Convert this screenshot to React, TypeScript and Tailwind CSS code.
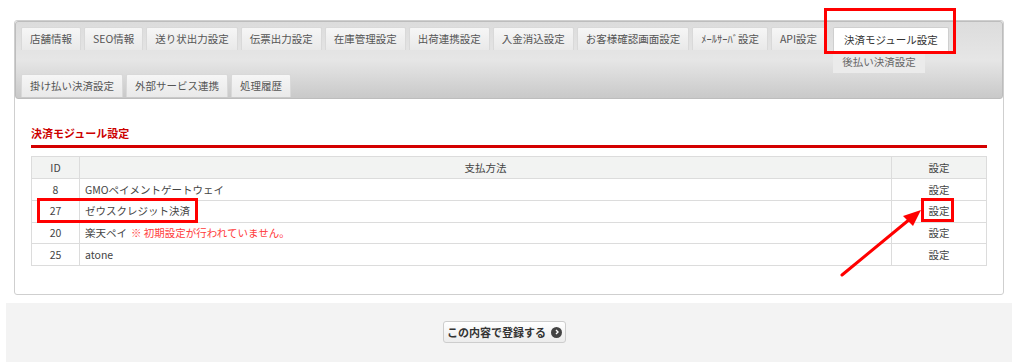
const row1 = [
  "店舗情報",
  "SEO情報",
  "送り状出力設定",
  "伝票出力設定",
  "在庫管理設定",
  "出荷連携設定",
  "入金消込設定",
  "お客様確認画面設定",
  "ﾒｰﾙｻｰﾊﾞ設定",
  "API設定",
];

const row2 = ["掛け払い決済設定", "外部サービス連携", "処理履歴"];

const methods = [
  { id: 8, name: "GMOペイメントゲートウェイ" },
  { id: 27, name: "ゼウスクレジット決済" },
  { id: 20, name: "楽天ペイ", warn: "※ 初期設定が行われていません。" },
  { id: 25, name: "atone" },
];

const Tab = ({ label }: { label: string }) => (
  <div className="h-[23px] px-2 flex items-center whitespace-nowrap text-[10.5px] text-[#555] bg-gradient-to-b from-[#f6f6f6] to-[#e9e9e9] border border-b-0 border-[#d9d9d9] rounded-t-[2px]">
    {label}
  </div>
);

export default function App() {
  return (
    <div className="relative w-[1024px] h-[362px] overflow-hidden bg-white font-['Noto_Sans_CJK_JP',sans-serif] text-[#444]">
      {/* main panel */}
      <div className="ml-[14px] mt-5 w-[990px] h-[275px] border border-[#cfcfcf] rounded-[3px]">
        {/* tab bar */}
        <div className="h-[78px] border border-[#bdbdbd] rounded-[3px] bg-gradient-to-b from-[#dcdcdc] via-[#e6e6e6] to-[#c9c9c9] pl-[5px] pt-[5px]">
          <div className="flex items-start gap-[3px]">
            {row1.map((t) => (
              <Tab key={t} label={t} />
            ))}
            <div className="flex flex-col ml-[4px]">
              <div className="h-6 px-[10px] flex items-center whitespace-nowrap text-[10.5px] text-[#333] bg-white border border-b-0 border-[#cfcfcf] rounded-t-[2px]">
                決済モジュール設定
              </div>
              <div className="h-[22px] w-[92px] flex items-center justify-center whitespace-nowrap text-[10.5px] text-[#666] bg-[#ebebeb]">
                後払い決済設定
              </div>
            </div>
          </div>
          <div className="flex items-start gap-[3px] mt-[1px]">
            {row2.map((t) => (
              <Tab key={t} label={t} />
            ))}
          </div>
        </div>

        {/* content */}
        <div className="px-4">
          <div className="mt-[27px] pb-[5px] border-b-[3px] border-[#d40000] text-[11px] leading-[14px] font-bold text-[#cc0000]">
            決済モジュール設定
          </div>
          <table className="mt-[8px] w-[956px] border-collapse text-[10.5px] text-[#444]">
            <thead>
              <tr className="h-[22px] bg-[#f2f3f2]">
                <th className="w-[48px] border border-[#dcdcdc] font-normal">ID</th>
                <th className="border border-[#dcdcdc] font-normal">支払方法</th>
                <th className="w-[95px] border border-[#dcdcdc] font-normal">設定</th>
              </tr>
            </thead>
            <tbody>
              {methods.map((m) => (
                <tr key={m.id} className="h-[21.75px]">
                  <td className="border border-[#dcdcdc] text-center">{m.id}</td>
                  <td className="border border-[#dcdcdc] px-[5px]">
                    {m.name}
                    {m.warn && <span className="ml-1 text-[#ff3b3b]">{m.warn}</span>}
                  </td>
                  <td className="border border-[#dcdcdc] text-center">設定</td>
                </tr>
              ))}
            </tbody>
          </table>
        </div>
      </div>

      {/* footer */}
      <div className="ml-[6px] mt-[8px] w-[1006px] h-[60px] bg-[#f3f3f3] flex justify-center pt-[18px] pr-[9px]">
        <button className="h-[22px] w-[123px] flex items-center justify-center gap-[5px] border border-[#cdcdcd] rounded-[3px] bg-gradient-to-b from-white to-[#ececec] text-[11px] font-bold text-[#333]">
          この内容で登録する
          <span className="w-[11px] h-[11px] rounded-full bg-[#444] flex items-center justify-center">
            <svg width="6" height="6" viewBox="0 0 6 6">
              <path d="M2 1 L4 3 L2 5" stroke="white" strokeWidth="1.4" fill="none" />
            </svg>
          </span>
        </button>
      </div>

      {/* annotations */}
      <div className="absolute left-[824px] top-[8px] w-[132px] h-[46px] border-[3px] border-[#ff0000]" />
      <div className="absolute left-[37px] top-[198px] w-[161px] h-[25px] border-[3px] border-[#ff0000]" />
      <div className="absolute left-[921px] top-[198px] w-[33px] h-[24px] border-[3px] border-[#ff0000]" />
      <svg className="absolute left-0 top-0" width="1024" height="362">
        <line x1="842" y1="275" x2="910" y2="219" stroke="#ff0000" strokeWidth="3" strokeLinecap="round" />
        <polygon points="921,210 903,216 913,226" fill="#ff0000" />
      </svg>
    </div>
  );
}
